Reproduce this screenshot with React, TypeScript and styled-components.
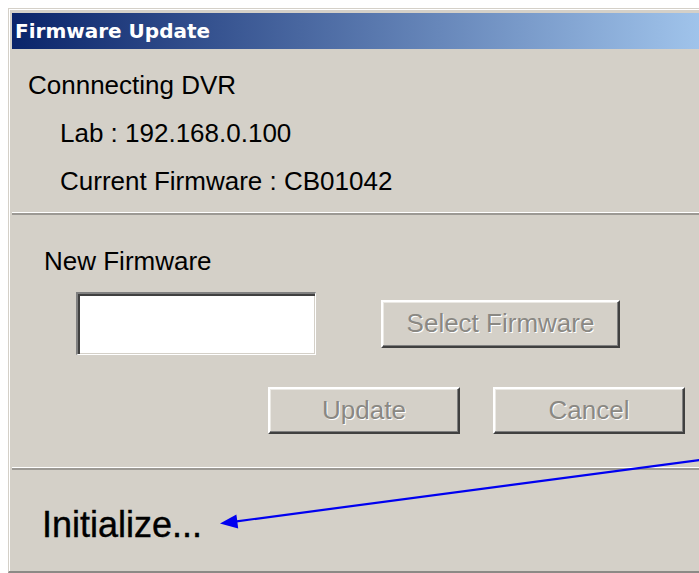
import React from "react";
import styled, { createGlobalStyle } from "styled-components";

const GlobalStyle = createGlobalStyle`
    html, body {
        margin: 0;
        padding: 0;
        background: #fff;
        overflow: hidden;
    }
`

const Page = styled.div`
    position: relative;
    width: 699px;
    height: 573px;
    overflow: hidden;
    padding: 8px 0 0 8px;
    box-sizing: border-box;
`

// classic 3d dialog frame, runs off the right edge
const Window = styled.div`
    width: 720px;
    height: 565px;
    box-sizing: border-box;
    background: #d4d0c8;
    border-top: 1px solid #d4d0c8;
    border-left: 1px solid #d4d0c8;
    border-bottom: 2px solid #8c8a86;
    box-shadow: inset 1px 1px 0 #fff;
    padding: 4px 0 0 3px;
    display: flex;
    flex-direction: column;
    font-family: "Liberation Sans", Arial, sans-serif;
    font-size: 26px;
    color: #000;
`

const TitleBar = styled.div`
    height: 36px;
    line-height: 36px;
    padding-left: 3px;
    background: linear-gradient(to right, #0a246a, #a6caf0);
    color: #fff;
    font-family: "DejaVu Sans", Verdana, sans-serif;
    font-weight: bold;
    font-size: 20px;
    white-space: nowrap;
`

const InfoSection = styled.div`
    padding: 12px 0 7px 16px;
`

const InfoLine = styled.div<{ $indent?: boolean }>`
    line-height: 48px;
    margin-left: ${p => (p.$indent ? 32 : 0)}px;
    white-space: pre;
`

const Divider = styled.div`
    border-top: 1px solid #fff;
    border-bottom: 2px solid #9c9994;
`

const UpdateSection = styled.div`
    padding: 31px 0 33px 32px;
`

const Label = styled.div`
    line-height: 30px;
`

const PickRow = styled.div`
    display: flex;
    align-items: center;
    gap: 65px;
    margin-top: 16px;
    padding-left: 32px;
`

const FileBox = styled.input`
    width: 240px;
    height: 63px;
    box-sizing: border-box;
    margin: 0;
    border-style: solid;
    border-width: 2px 1px 1px 2px;
    border-color: #808080 #fff #fff #808080;
    box-shadow: inset 2px 2px 0 #404040, inset -1px -1px 0 #d4d0c8;
    background: #fff;
    outline: none;
`

const ActionRow = styled.div`
    display: flex;
    gap: 33px;
    margin-top: 32px;
    padding-left: 224px;
`

const Button = styled.button<{ $w: number; $h: number }>`
    width: ${p => p.$w}px;
    height: ${p => p.$h}px;
    box-sizing: border-box;
    margin: 0;
    padding: 0;
    background: #d4d0c8;
    border-style: solid;
    border-width: 2px;
    border-color: #fff #404040 #404040 #fff;
    box-shadow: inset -1px -1px 0 #808080, inset 1px 1px 0 #ebe9e4;
    font-family: "Liberation Sans", Arial, sans-serif;
    font-size: 26px;
    color: #8a8883;
    text-shadow: 1px 1px 0 #fff;
    white-space: nowrap;
`

const StatusSection = styled.div`
    padding: 35px 0 0 30px;
`

const StatusText = styled.div`
    font-size: 36px;
    line-height: 40px;
    -webkit-text-stroke: 0.4px #000;
`

// blue callout pointing at the status text
const Callout = styled.svg`
    position: absolute;
    left: 0;
    top: 0;
    pointer-events: none;
`

export default function App() {
    return (
        <>
            <GlobalStyle />
            <Page>
                <Window>
                    <TitleBar>Firmware Update</TitleBar>
                    <InfoSection>
                        <InfoLine>Connnecting DVR</InfoLine>
                        <InfoLine $indent>Lab : 192.168.0.100</InfoLine>
                        <InfoLine $indent>Current Firmware : CB01042</InfoLine>
                    </InfoSection>
                    <Divider />
                    <UpdateSection>
                        <Label>New Firmware</Label>
                        <PickRow>
                            <FileBox readOnly />
                            <Button $w={239} $h={48} disabled>Select Firmware</Button>
                        </PickRow>
                        <ActionRow>
                            <Button $w={192} $h={47} disabled>Update</Button>
                            <Button $w={192} $h={47} disabled>Cancel</Button>
                        </ActionRow>
                    </UpdateSection>
                    <Divider />
                    <StatusSection>
                        <StatusText>Initialize...</StatusText>
                    </StatusSection>
                </Window>
                <Callout width={699} height={573} viewBox="0 0 699 573">
                    <line x1={233} y1={521.8} x2={700} y2={460} stroke="#0000f0" strokeWidth={2.2} />
                    <polygon points="220,523.6 236.4,514.5 238.2,528.5" fill="#0000f0" />
                </Callout>
            </Page>
        </>
    );
}
